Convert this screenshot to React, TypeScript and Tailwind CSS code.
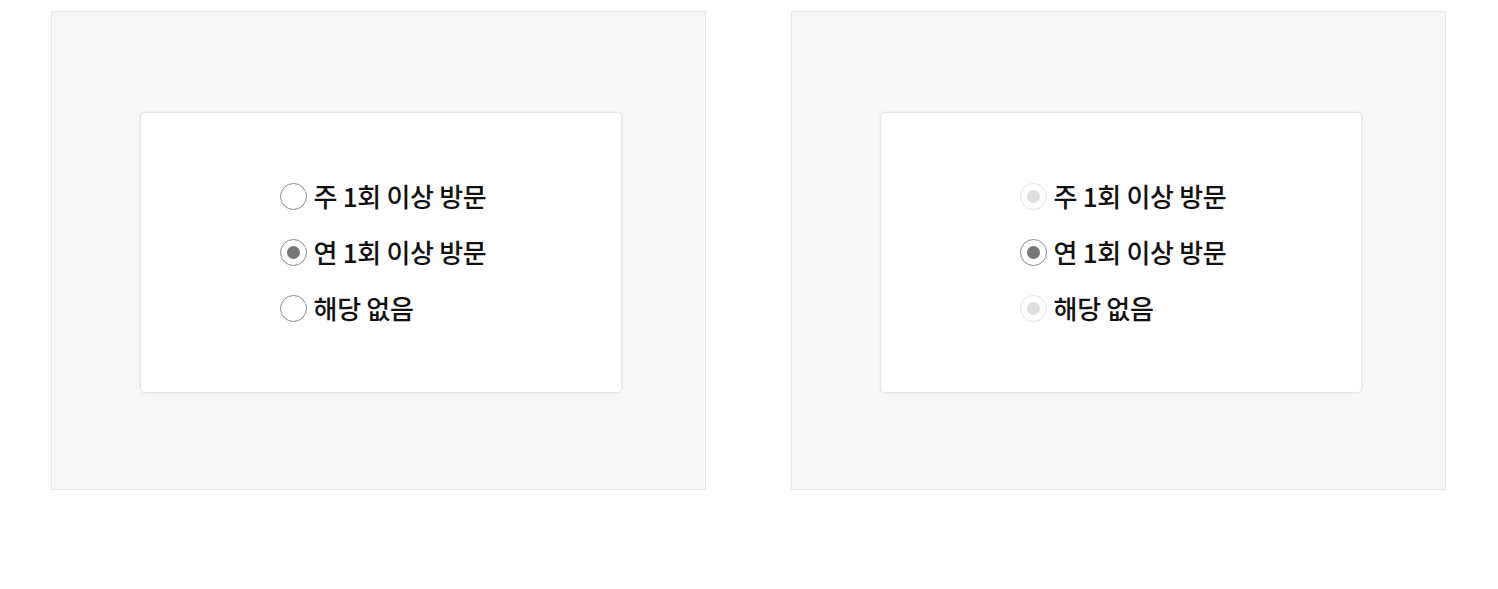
import React from "react";

type Opt = { label: string; checked?: boolean };
const opts: Opt[] = [
  { label: "주 1회 이상 방문" },
  { label: "연 1회 이상 방문", checked: true },
  { label: "해당 없음" },
];

function Radio({ checked, disabled }: { checked?: boolean; disabled?: boolean }) {
  const border = disabled && !checked ? "border-[#e2e2e2]" : "border-[#8a8a8a]";
  const dot = checked ? "bg-[#767676]" : disabled ? "bg-[#dedede]" : "";
  return (
    <span className={`flex h-[27px] w-[27px] shrink-0 items-center justify-center rounded-full border bg-white ${border}`}>
      {(checked || disabled) && <span className={`h-[13px] w-[13px] rounded-full ${dot}`} />}
    </span>
  );
}

function Panel({ disabled }: { disabled?: boolean }) {
  return (
    <div className="h-[479px] w-[655px] border border-[#e6e6e6] bg-[#f7f7f7] pl-[89px] pt-[101px]">
      <div className="flex h-[279px] w-[480px] items-center justify-center rounded-[4px] bg-white pl-[4px] shadow-[0_0_3px_rgba(0,0,0,0.2)]">
        <div className="flex flex-col gap-[27px]">
          {opts.map((o) => (
            <div key={o.label} className="flex items-center gap-[7px]">
              <Radio checked={o.checked} disabled={disabled} />
              <span className="pb-[2px] text-[26px] font-medium leading-[27px] tracking-[-0.3px] text-[#111]">{o.label}</span>
            </div>
          ))}
        </div>
      </div>
    </div>
  );
}

export default function App() {
  return (
    <div
      className="flex h-[589px] w-[1498px] gap-[85px] bg-white pl-[51px] pt-[11px]"
      style={{ fontFamily: '"Noto Sans CJK KR", "Noto Sans", sans-serif' }}
    >
      <Panel />
      <Panel disabled />
    </div>
  );
}
